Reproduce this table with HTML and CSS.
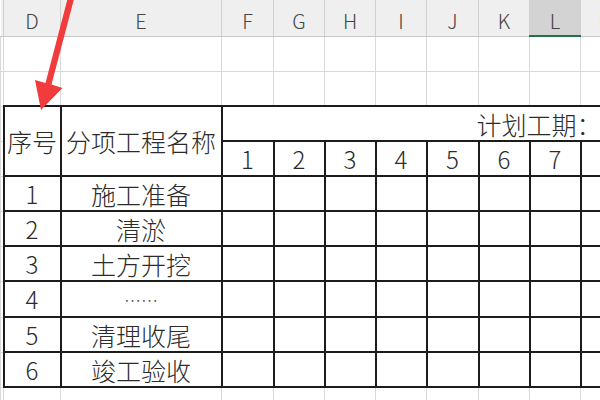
FILE: index.html
```html
<!DOCTYPE html>
<html lang="zh-CN">
<head>
<meta charset="utf-8">
<title>施工进度计划表</title>
<link rel="stylesheet" href="styles.css">
</head>
<body>
<div class="sheet-wrap">
  <table class="sheet">
    <colgroup>
      <col class="c-c"><col class="c-d"><col class="c-e">
      <col class="c-w52"><col class="c-w51"><col class="c-w51"><col class="c-w51">
      <col class="c-w52"><col class="c-w51"><col class="c-w51"><col class="c-w51"><col class="c-w51">
    </colgroup>
    <thead>
      <tr class="col-hdr">
        <th></th><th>D</th><th>E</th><th>F</th><th>G</th><th>H</th><th>I</th><th>J</th><th>K</th><th class="sel">L</th><th>M</th><th>N</th>
      </tr>
    </thead>
    <tbody>
      <tr class="row"><td></td><td></td><td></td><td></td><td></td><td></td><td></td><td></td><td></td><td></td><td></td><td></td></tr>
      <tr class="row"><td></td><td></td><td></td><td></td><td></td><td></td><td></td><td></td><td></td><td></td><td></td><td></td></tr>
      <tr class="row">
        <td></td>
        <td class="b zh" rowspan="2">序号</td>
        <td class="b zh" rowspan="2">分项工程名称</td>
        <td class="b zh plan" colspan="9">计划工期：</td>
      </tr>
      <tr class="row">
        <td></td>
        <td class="b num">1</td><td class="b num">2</td><td class="b num">3</td><td class="b num">4</td>
        <td class="b num">5</td><td class="b num">6</td><td class="b num">7</td><td class="b num">8</td><td class="b num">9</td>
      </tr>
      <tr class="row"><td></td><td class="b num">1</td><td class="b zh">施工准备</td><td class="b"></td><td class="b"></td><td class="b"></td><td class="b"></td><td class="b"></td><td class="b"></td><td class="b"></td><td class="b"></td><td class="b"></td></tr>
      <tr class="row"><td></td><td class="b num">2</td><td class="b zh">清淤</td><td class="b"></td><td class="b"></td><td class="b"></td><td class="b"></td><td class="b"></td><td class="b"></td><td class="b"></td><td class="b"></td><td class="b"></td></tr>
      <tr class="row"><td></td><td class="b num">3</td><td class="b zh">土方开挖</td><td class="b"></td><td class="b"></td><td class="b"></td><td class="b"></td><td class="b"></td><td class="b"></td><td class="b"></td><td class="b"></td><td class="b"></td></tr>
      <tr class="row"><td></td><td class="b num">4</td><td class="b zh"><span class="dots">……</span></td><td class="b"></td><td class="b"></td><td class="b"></td><td class="b"></td><td class="b"></td><td class="b"></td><td class="b"></td><td class="b"></td><td class="b"></td></tr>
      <tr class="row"><td></td><td class="b num">5</td><td class="b zh">清理收尾</td><td class="b"></td><td class="b"></td><td class="b"></td><td class="b"></td><td class="b"></td><td class="b"></td><td class="b"></td><td class="b"></td><td class="b"></td></tr>
      <tr class="row"><td></td><td class="b num">6</td><td class="b zh">竣工验收</td><td class="b"></td><td class="b"></td><td class="b"></td><td class="b"></td><td class="b"></td><td class="b"></td><td class="b"></td><td class="b"></td><td class="b"></td></tr>
      <tr class="row"><td></td><td></td><td></td><td></td><td></td><td></td><td></td><td></td><td></td><td></td><td></td><td></td></tr>
    </tbody>
  </table>
  <svg class="arrow" width="120" height="120" viewBox="0 0 120 120" aria-hidden="true">
    <polygon fill="#f23b3c" points="67.5,-1 74,-1 51.5,84.5 62.5,88 41,110 35,80 45.5,83"/>
  </svg>
</div>
</body>
</html>
```
FILE: styles.css
```css
html, body {
  margin: 0;
  padding: 0;
  background: #ffffff;
}

.sheet-wrap {
  position: relative;
  width: 600px;
  height: 400px;
  overflow: hidden;
}

.sheet {
  border-collapse: collapse;
  table-layout: fixed;
  width: 680px;
  font-family: "Noto Sans CJK SC", "Noto Sans", sans-serif;
}

.c-c { width: 3px; }
.c-d { width: 57px; }
.c-e { width: 161px; }
.c-w52 { width: 52px; }
.c-w51 { width: 51px; }

.col-hdr th {
  height: 36px;
  padding: 7px 0 0 0;
  box-sizing: border-box;
  background: #efefef;
  border-right: 1px solid #d0d0d0;
  border-bottom: 1px solid #c6c6c6;
  font-weight: 300;
  font-size: 20px;
  line-height: 28px;
  color: #444444;
  text-align: center;
  vertical-align: middle;
}

.col-hdr th.sel {
  background: #d3d3d3;
  border-bottom: 2px solid #217346;
}

.row td {
  height: 35px;
  padding: 0;
  box-sizing: border-box;
  border: 1px solid #d9d9d9;
  text-align: center;
  vertical-align: middle;
  color: #2b2b2b;
  overflow: hidden;
  white-space: nowrap;
}

.row td.b {
  border: 2px solid #1c1c1c;
}

.zh {
  font-size: 25px;
  line-height: 30px;
  font-weight: 300;
}

.num {
  font-size: 24px;
  line-height: 30px;
  font-weight: 300;
}

.plan {
  text-align: left !important;
  padding-left: 254px !important;
}

.dots {
  font-size: 17px;
  color: #555555;
  letter-spacing: 0;
}

.arrow {
  position: absolute;
  left: 0;
  top: 0;
}
```
